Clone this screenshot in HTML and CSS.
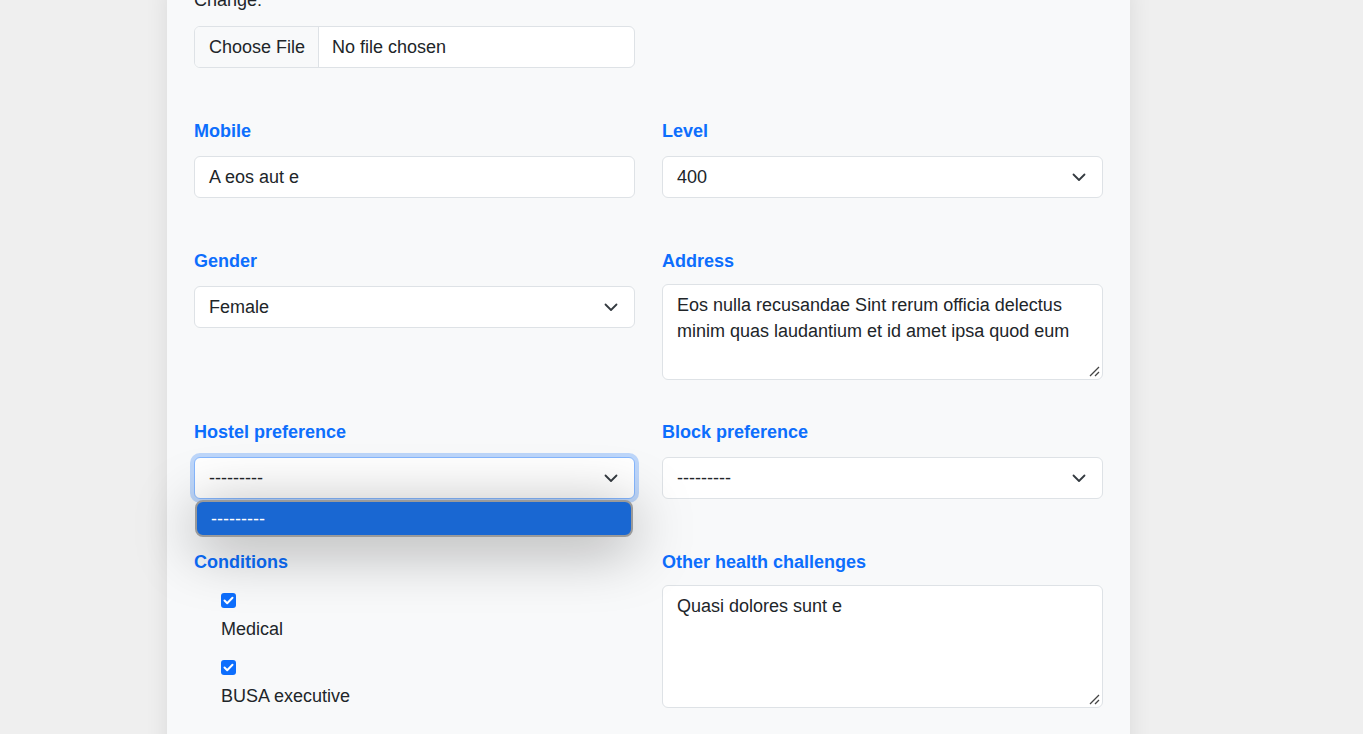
FILE: index.html
```html
<!DOCTYPE html>
<html lang="en">
<head>
<meta charset="utf-8">
<title>Student profile</title>
<link rel="stylesheet" href="styles.css">
</head>
<body>
<div class="page">
  <div class="card">
    <div class="grid">
      <div class="field">
        <div class="plain-label">Change:</div>
        <div class="file-input">
          <span class="file-btn">Choose File</span>
          <span class="file-name">No file chosen</span>
        </div>
      </div>
      <div class="field"></div>

      <div class="field">
        <div class="label">Mobile</div>
        <div class="control">A eos aut e</div>
      </div>
      <div class="field">
        <div class="label">Level</div>
        <div class="control select">400
          <svg class="chev" width="14" height="9" viewBox="0 0 14 9"><path d="M1.5 1.5 L7 7 L12.5 1.5" fill="none" stroke="#343a40" stroke-width="1.8" stroke-linecap="round" stroke-linejoin="round"/></svg>
        </div>
      </div>

      <div class="field">
        <div class="label">Gender</div>
        <div class="control select">Female
          <svg class="chev" width="14" height="9" viewBox="0 0 14 9"><path d="M1.5 1.5 L7 7 L12.5 1.5" fill="none" stroke="#343a40" stroke-width="1.8" stroke-linecap="round" stroke-linejoin="round"/></svg>
        </div>
      </div>
      <div class="field">
        <div class="label">Address</div>
        <div class="textarea addr">Eos nulla recusandae Sint rerum officia delectus minim quas laudantium et id amet ipsa quod eum
          <svg class="grip" width="12" height="12" viewBox="0 0 12 12"><path d="M11 2 L2 11 M11 7 L7 11" stroke="#444" stroke-width="1.3" fill="none"/></svg>
        </div>
      </div>

      <div class="field">
        <div class="label">Hostel preference</div>
        <div class="select-wrap">
          <div class="control select focused">---------
            <svg class="chev" width="14" height="9" viewBox="0 0 14 9"><path d="M1.5 1.5 L7 7 L12.5 1.5" fill="none" stroke="#343a40" stroke-width="1.8" stroke-linecap="round" stroke-linejoin="round"/></svg>
          </div>
          <div class="popup"><div class="option">---------</div></div>
        </div>
      </div>
      <div class="field">
        <div class="label">Block preference</div>
        <div class="control select">---------
          <svg class="chev" width="14" height="9" viewBox="0 0 14 9"><path d="M1.5 1.5 L7 7 L12.5 1.5" fill="none" stroke="#343a40" stroke-width="1.8" stroke-linecap="round" stroke-linejoin="round"/></svg>
        </div>
      </div>

      <div class="field">
        <div class="label">Conditions</div>
        <div class="checks">
          <div class="check-item">
            <span class="box"><svg width="11" height="9" viewBox="0 0 11 9"><path d="M1.5 4.5 L4.2 7.2 L9.5 1.8" fill="none" stroke="#fff" stroke-width="2" stroke-linecap="round" stroke-linejoin="round"/></svg></span>
            <div class="check-label">Medical</div>
          </div>
          <div class="check-item">
            <span class="box"><svg width="11" height="9" viewBox="0 0 11 9"><path d="M1.5 4.5 L4.2 7.2 L9.5 1.8" fill="none" stroke="#fff" stroke-width="2" stroke-linecap="round" stroke-linejoin="round"/></svg></span>
            <div class="check-label">BUSA executive</div>
          </div>
        </div>
      </div>
      <div class="field">
        <div class="label">Other health challenges</div>
        <div class="textarea other">Quasi dolores sunt e
          <svg class="grip" width="12" height="12" viewBox="0 0 12 12"><path d="M11 2 L2 11 M11 7 L7 11" stroke="#444" stroke-width="1.3" fill="none"/></svg>
        </div>
      </div>
    </div>
  </div>
</div>
</body>
</html>
```

FILE: styles.css
```css
* { box-sizing: border-box; }
html, body { margin: 0; padding: 0; }
body {
  background: #efefef;
  font-family: "Liberation Sans", Arial, sans-serif;
  font-size: 18px;
  line-height: 24px;
  color: #212529;
  overflow: hidden;
  height: 734px;
}
.page {
  padding-left: 167px;
}
.card {
  width: 963px;
  min-height: 800px;
  background: #f8f9fa;
  box-shadow: 0 0 22px rgba(0, 0, 0, 0.09);
  padding: 0 27px;
  margin-top: -12px;
}
.grid {
  display: grid;
  grid-template-columns: 441px 441px;
  column-gap: 27px;
  row-gap: 51px;
}
.plain-label { height: 24px; color: #212529; }
.file-input {
  margin-top: 14px;
  display: flex;
  height: 42px;
  border: 1px solid #dee2e6;
  border-radius: 6px;
  overflow: hidden;
  background: #fff;
}
.file-btn {
  padding: 8px 13px 8px 14px;
  background: #f8f9fa;
  border-right: 1px solid #dee2e6;
}
.file-name { padding: 8px 14px 8px 13px; }
.label {
  color: #0d6efd;
  font-weight: bold;
  height: 24px;
  margin-bottom: 13px;
}
.control {
  position: relative;
  height: 42px;
  padding: 8px 14px;
  background: #fff;
  border: 1px solid #dee2e6;
  border-radius: 6px;
}
.chev {
  position: absolute;
  right: 16px;
  top: 50%;
  margin-top: -4px;
}
.focused {
  border-color: #86b7fe;
  box-shadow: 0 0 0 4px rgba(13, 110, 253, 0.25);
}
.select-wrap { position: relative; }
.popup {
  position: absolute;
  left: 1px;
  right: 2px;
  top: 43px;
  height: 37px;
  border: 2px solid #9a9a9a;
  border-radius: 8px;
  background: #1967d2;
  box-shadow: 0 10px 60px rgba(0, 0, 0, 0.38);
  z-index: 5;
}
.option {
  color: #fff;
  padding: 5px 0 0 14px;
  line-height: 24px;
}
.textarea {
  position: relative;
  margin-top: -2px;
  background: #fff;
  border: 1px solid #dee2e6;
  border-radius: 6px;
  padding: 7px 14px;
  line-height: 26px;
}
.addr { height: 96px; margin-bottom: -11px; }
.other { height: 123px; }
.grip {
  position: absolute;
  right: 2px;
  bottom: 2px;
}
.checks {
  padding-left: 27px;
  padding-top: 6px;
  display: flex;
  flex-direction: column;
  gap: 19px;
}
.check-item { display: flex; flex-direction: column; align-items: flex-start; }
.box {
  width: 15px;
  height: 15px;
  background: #0d6efd;
  border-radius: 3px;
  display: flex;
  align-items: center;
  justify-content: center;
  margin-bottom: 9px;
}
.check-label { line-height: 24px; }
```
